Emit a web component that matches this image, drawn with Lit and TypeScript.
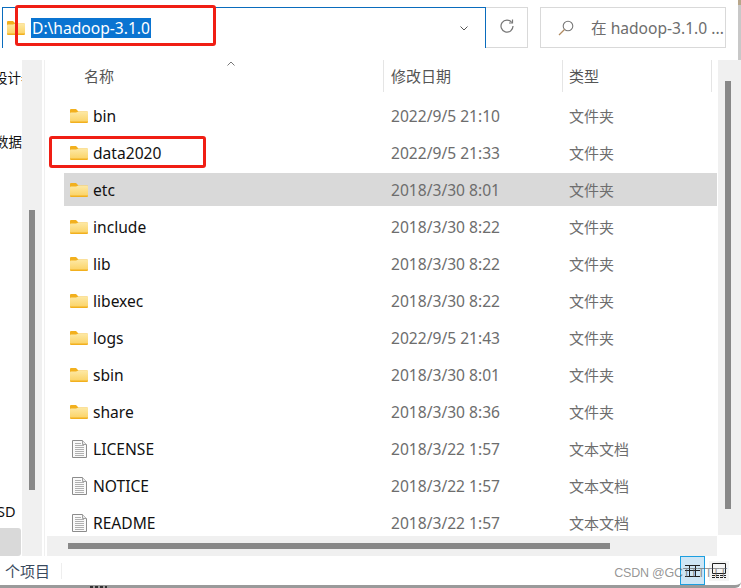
import { LitElement, html, css, svg } from "lit";
import { customElement } from "lit/decorators.js";

const folderIcon = html`<svg class="ic" width="18" height="14" viewBox="0 0 18 14">
  <defs><linearGradient id="fb" x1="0" y1="0" x2="0" y2="1"><stop offset="0" stop-color="#fde9a6"/><stop offset="1" stop-color="#fbd469"/></linearGradient></defs>
  <path d="M0 1Q0 0 1 0H6L8.500 2.500H17Q18 2.500 18 3.500V13Q18 14 17 14H1Q0 14 0 13Z" fill="#f2b01e"/>
  <path d="M0 4.500Q0 3.500 1 3.500H6L8.500 2.500H17Q18 2.500 18 3.500V12.500H0Z" fill="url(#fb)"/>
</svg>`;

const docIcon = html`<svg width="15" height="18" viewBox="0 0 15 18">
  <path d="M.5.500H10.500L14.500 4.500V17.500H.5Z" fill="#fafafa" stroke="#8c8c8c"/>
  <path d="M10.500.500V4.500H14.500" fill="#e8e8e8" stroke="#a0a0a0"/>
  ${svg`<path d="M3 3.500H9M3 5.500H12M3 7.500H12M3 9.500H12M3 11.500H12M3 13.500H12M3 15.500H12" stroke="#b0b0b0" stroke-width="1"/>`}
</svg>`;

type Row = { name: string; date: string; type: string; doc?: boolean; sel?: boolean };
const rows: Row[] = [
  { name: "bin", date: "2022/9/5 21:10", type: "文件夹" },
  { name: "data2020", date: "2022/9/5 21:33", type: "文件夹" },
  { name: "etc", date: "2018/3/30 8:01", type: "文件夹", sel: true },
  { name: "include", date: "2018/3/30 8:22", type: "文件夹" },
  { name: "lib", date: "2018/3/30 8:22", type: "文件夹" },
  { name: "libexec", date: "2018/3/30 8:22", type: "文件夹" },
  { name: "logs", date: "2022/9/5 21:43", type: "文件夹" },
  { name: "sbin", date: "2018/3/30 8:01", type: "文件夹" },
  { name: "share", date: "2018/3/30 8:36", type: "文件夹" },
  { name: "LICENSE", date: "2018/3/22 1:57", type: "文本文档", doc: true },
  { name: "NOTICE", date: "2018/3/22 1:57", type: "文本文档", doc: true },
  { name: "README", date: "2018/3/22 1:57", type: "文本文档", doc: true },
];

@customElement("app-root")
export class AppRoot extends LitElement {
  static styles = css`
    :host {
      display: block; width: 741px; height: 588px; position: relative; overflow: hidden;
      background: #fff; color: #111;
      font: 15.6px "Noto Sans", "Noto Sans CJK SC", sans-serif;
    }
    .frame { height: 588px; box-sizing: border-box; display: flex; flex-direction: column; border-bottom: 3px solid #9a9a9a; border-radius: 0 0 6px 0; }
    .toolbar { height: 41px; margin-top: 7px; padding-left: 2px; display: flex; flex: none; }
    .address { width: 484px; box-sizing: border-box; border: 1px solid #0a6cbd; border-bottom: none; display: flex; align-items: center; padding: 0 17px 0 4px; }
    .address .ic { margin-right: 6px; }
    .path { background: #0a74d1; color: #fff; line-height: 20px; padding: 0 1px; }
    .chev { margin-left: auto; }
    .refresh { width: 42px; box-sizing: border-box; border: 1px solid #d9d9d9; border-left: none; display: flex; align-items: center; justify-content: center; padding-bottom: 3px; }
    .search { width: 186px; margin-left: 12px; box-sizing: border-box; border: 1px solid #d9d9d9; display: flex; align-items: center; padding-left: 17px; color: #6d6d6d; white-space: nowrap; gap: 17px; overflow: hidden; }
    .main { flex: 1; display: flex; margin-top: 12px; min-height: 0; }
    .nav { width: 22px; flex: none; font-size: 13.5px; overflow: hidden; display: flex; flex-direction: column; }
    .nav span { white-space: nowrap; height: 20px; line-height: 20px; }
    .nav .a { margin: 8px 0 0 -6px; }
    .nav .b { margin: 44px 0 0 -5px; }
    .nav .c { margin: 349px 0 0 -3px; font-size: 14.5px; }
    .nav .drive { margin-top: 7px; height: 28px; background: #d9d9d9; border-radius: 0 3px 3px 0; width: 21px; }
    .navbar { width: 20px; flex: none; background: #f0f0f0; padding-left: 7px; box-sizing: border-box; }
    .navbar i { display: block; width: 6px; height: 280px; margin-top: 150px; background: #888; }
    .files { width: 674px; flex: none; margin-left: 2px; display: flex; flex-direction: column; position: relative; border-left: 1px solid #f0f0f0; box-sizing: border-box; }
    .head { height: 32px; display: flex; position: relative; color: #555; flex: none; font-size: 15px; }
    .head div { display: flex; align-items: center; box-sizing: border-box; padding-bottom: 2px; }
    .h1 { width: 338px; padding-left: 39px; }
    .h2 { width: 179px; border-left: 1px solid #e5e5e5; padding-left: 7px; }
    .h3 { width: 150px; border-left: 1px solid #e5e5e5; padding-left: 6px; border-right: 1px solid #e5e5e5; }
    .sort { position: absolute; left: 182px; top: 1px; }
    .list { flex: 1; padding-top: 7px; padding-left: 19px; overflow: hidden; }
    .row { height: 33px; margin-bottom: 4px; display: flex; align-items: center; width: 653px; }
    .row.sel { background: #d9d9d9; }
    .name { width: 327px; display: flex; align-items: center; }
    .name .ic { margin: 0 5px 0 6px; }
    .name .doc { display: flex; margin: 0 6px 0 8px; }
    .date { width: 178px; color: #6d6d6d; }
    .type { color: #6d6d6d; font-size: 15px; }
    .hbar { height: 20px; flex: none; background: #f0f0f0; padding: 7px 0 0 21px; margin-left: 2px; box-sizing: border-box; width: 670px; }
    .hbar i { display: block; height: 6px; width: 542px; background: #888; }
    .vbar { width: 23px; flex: none; margin-bottom: 21px; background: #f0f0f0; padding-left: 7px; box-sizing: border-box; }
    .vbar i { display: block; width: 6px; height: 428px; margin-top: 21px; background: #888; }
    .status { height: 29px; flex: none; display: flex; align-items: center; position: relative; font-size: 15px; color: #3a4a5e; }
    .count { width: 62px; padding-left: 5px; box-sizing: border-box; height: 16px; line-height: 16px; border-right: 1px solid #eee; }
    .views { margin-left: auto; display: flex; align-items: center; gap: 4px; margin-right: 12px; }
    .view { width: 25px; height: 29px; box-sizing: border-box; display: flex; align-items: center; justify-content: center; }
    .view.on { background: #cfe6f5; border: 1px solid #1c9fe0; }
    .view.off { background: #f5f5f5; width: 20px; height: 20px; }
    .edge { position: absolute; right: 0; top: 0; width: 3px; height: 60px; background: linear-gradient(#b8a68a 0 5px, #c8c8c8 5px); }
    .dots { position: absolute; left: 90px; bottom: 0; width: 17px; height: 2px; background: repeating-linear-gradient(90deg, #333 0 3px, transparent 3px 5px); }
    .mark { position: absolute; border: 3px solid #f01e14; border-radius: 3px; box-sizing: border-box; pointer-events: none; }
    .m1 { left: 15px; top: 5px; width: 201px; height: 41px; }
    .m2 { left: 49px; top: 136px; width: 157px; height: 32px; }
    .wm { position: absolute; right: 14px; bottom: 8px; font: 12.5px "Liberation Sans", sans-serif; letter-spacing: -.25px; color: rgba(90, 90, 90, .65); white-space: nowrap; }
  `;

  render() {
    return html`
      <div class="frame">
        <div class="toolbar">
          <div class="address">
            ${folderIcon}
            <span class="path">D:\\hadoop-3.1.0</span>
            <svg class="chev" width="8" height="5" viewBox="0 0 8 5"><path d="M.5.500L4 4L7.500.500" fill="none" stroke="#555"/></svg>
          </div>
          <div class="refresh">
            <svg width="14" height="14" viewBox="0 0 14 14"><path d="M11.800 3.500A6 6 0 1 0 13 7" fill="none" stroke="#777" stroke-width="1.200"/><path d="M12.500 .5V4H9" fill="none" stroke="#777" stroke-width="1.200"/></svg>
          </div>
          <div class="search">
            <svg width="16" height="16" viewBox="0 0 16 16"><circle cx="10" cy="6" r="4.800" fill="none" stroke="#777" stroke-width="1.100"/><path d="M6.500 9.500L1 15" stroke="#b0895f" stroke-width="1.200"/></svg>
            <span>在 hadoop-3.1.0 ...</span>
          </div>
        </div>
        <div class="main">
          <div class="nav">
            <span class="a">设计器</span>
            <span class="b">数据库</span>
            <span class="c">SD</span>
            <span class="drive"></span>
          </div>
          <div class="navbar"><i></i></div>
          <div class="files">
            <div class="head">
              <div class="h1">名称</div><div class="h2">修改日期</div><div class="h3">类型</div>
              <svg class="sort" width="8" height="5" viewBox="0 0 8 5"><path d="M.5 4.500L4 1L7.500 4.500" fill="none" stroke="#777"/></svg>
            </div>
            <div class="list">
              ${rows.map(
                (r) => html`<div class="row ${r.sel ? "sel" : ""}">
                  <div class="name">
                    ${r.doc ? html`<span class="doc">${docIcon}</span>` : folderIcon}
                    <span>${r.name}</span>
                  </div>
                  <div class="date">${r.date}</div>
                  <div class="type">${r.type}</div>
                </div>`
              )}
            </div>
            <div class="hbar"><i></i></div>
          </div>
          <div class="vbar"><i></i></div>
        </div>
        <div class="status">
          <div class="count">个项目</div>
          <div class="views">
            <div class="view on">
              <svg width="15" height="12" viewBox="0 0 15 12"><path d="M0 .5H15M0 5.500H15M0 11.500H15M4.500 1V11M10.500 1V11" stroke="#222" fill="none"/></svg>
            </div>
            <div class="view off">
              <svg width="14" height="15" viewBox="0 0 14 15"><path d="M.5 10.500V.5H13.500V10.500Z" fill="none" stroke="#222"/><path d="M0 12.500H14M0 14.500H14" stroke="#222" stroke-dasharray="3 1"/></svg>
            </div>
          </div>
        </div>
      </div>
      <div class="edge"></div>
      <div class="dots"></div>
      <div class="mark m1"></div>
      <div class="mark m2"></div>
      <div class="wm">CSDN @GCTTTTTT</div>
    `;
  }
}
